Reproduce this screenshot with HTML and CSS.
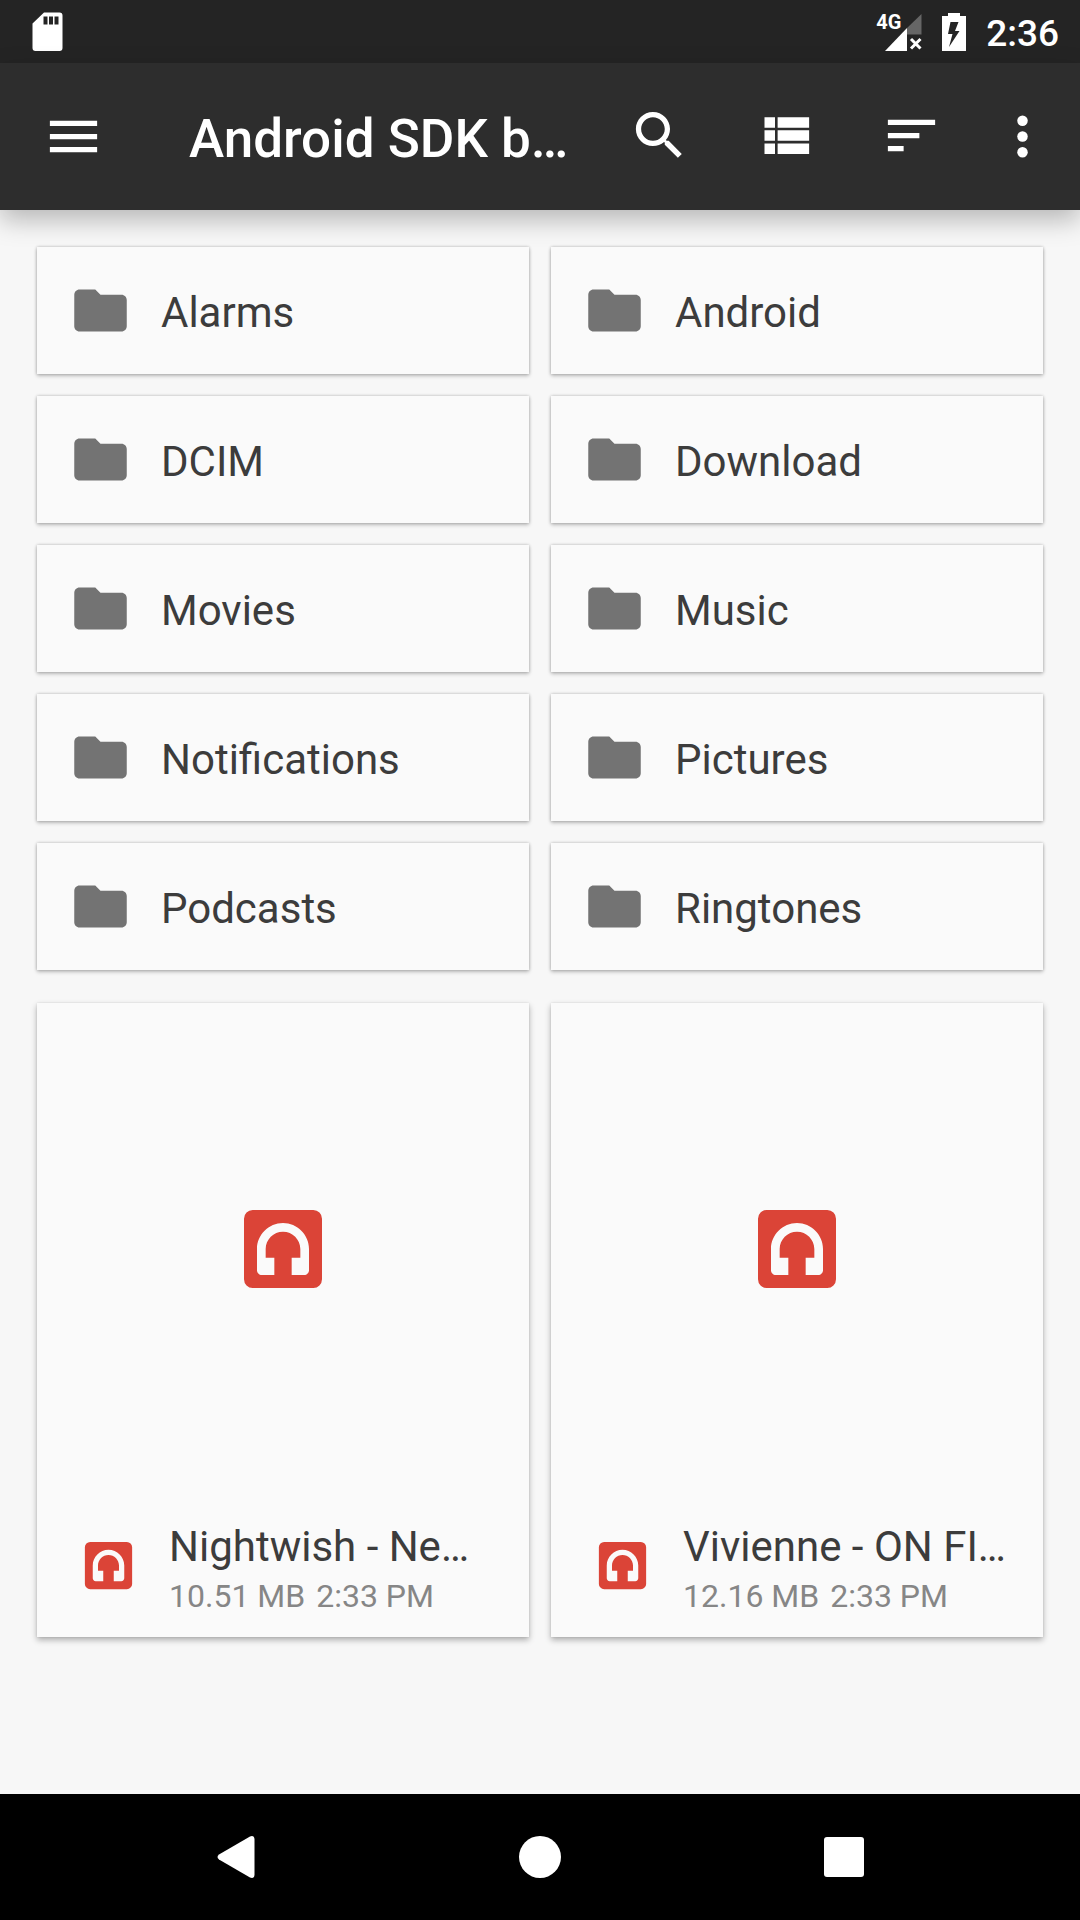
FILE: index.html
```html
<!DOCTYPE html>
<html lang="en">
<head>
<meta charset="utf-8">
<meta name="viewport" content="width=device-width, initial-scale=1">
<title>Files</title>
<link rel="stylesheet" href="styles.css">
</head>
<body>
<svg class="sprite" aria-hidden="true">
  <symbol id="folder" viewBox="0 0 24 24"><path d="M10 4H4c-1.100 0-1.990.900-1.990 2L2 18c0 1.100.900 2 2 2h16c1.100 0 2-.900 2-2V8c0-1.100-.900-2-2-2h-8z"/></symbol>
  <symbol id="audio" viewBox="0 0 24 24"><path fill-rule="evenodd" d="M5 3h14a2 2 0 0 1 2 2v14a2 2 0 0 1-2 2H5a2 2 0 0 1-2-2V5a2 2 0 0 1 2-2zM12 6c-3.300 0-6 2.700-6 6v4.900c0 .600.500 1.100 1.100 1.100H10v-4H8v-2c0-2.200 1.800-4 4-4s4 1.800 4 4v2h-2v4h2.900c.600 0 1.100-.500 1.100-1.100V12c0-3.300-2.700-6-6-6z"/></symbol>
</svg>

<div class="status-bar">
  <svg class="status-card" viewBox="0 0 31 39" aria-hidden="true"><path fill-rule="evenodd" d="M12 0.500H27.500a3 3 0 0 1 3 3V36a3 3 0 0 1-3 3H3.500a3 3 0 0 1-3-3V11.500zM11.500 4.500v8h4v-8zM17 4.500v8h4v-8zM22.500 4.500v8h4v-8z"/></svg>
  <div class="status-icons">
    <div class="signal">
      <svg class="signal-icon" viewBox="0 0 46 39" aria-hidden="true">
        <path opacity=".3" d="M45.500 2v20.500H31V16z"/>
        <path d="M31 16v23H9z"/>
        <path d="M35 27l9.500 9.500M44.500 27l-9.500 9.500" stroke="#fff" stroke-width="3"/>
      </svg>
      <span class="signal-type">4G</span>
    </div>
    <svg class="battery" viewBox="0 0 24 38" aria-hidden="true"><path fill-rule="evenodd" d="M6 0h12v3h6v35H0V3h6zM8.500 9L6 21h4.500L7 34l10.500-16H13l3.500-9z"/></svg>
    <time class="clock" datetime="14:36">2:36</time>
  </div>
</div>

<header class="toolbar">
  <button class="icon-button menu-button" type="button" aria-label="Open menu">
    <svg class="icon" viewBox="0 0 24 24"><path d="M3 18h18v-2H3zm0-5h18v-2H3zm0-7v2h18V6z"/></svg>
  </button>
  <h1 class="toolbar-title">Android SDK b…</h1>
  <div class="actions">
    <button class="icon-button" type="button" aria-label="Search">
      <svg class="icon" viewBox="0 0 24 24"><path d="M15.500 14h-.790l-.280-.270C15.410 12.590 16 11.110 16 9.500 16 5.910 13.090 3 9.500 3S3 5.910 3 9.500 5.910 16 9.500 16c1.610 0 3.090-.590 4.230-1.570l.270.280v.790l5 4.990L20.490 19zm-6 0C7.010 14 5 11.990 5 9.500S7.010 5 9.500 5 14 7.010 14 9.500 11.990 14 9.500 14z"/></svg>
    </button>
    <button class="icon-button" type="button" aria-label="List view">
      <svg class="icon" viewBox="0 0 24 24"><path d="M4 14h4v-4H4zm0 5h4v-4H4zM4 9h4V5H4zm5 5h12v-4H9zm0 5h12v-4H9zM9 5v4h12V5z"/></svg>
    </button>
    <button class="icon-button" type="button" aria-label="Sort">
      <svg class="icon" viewBox="0 0 24 24"><path d="M3 18h6v-2H3zM3 6v2h18V6zm0 7h12v-2H3z"/></svg>
    </button>
  </div>
  <button class="icon-button more-button" type="button" aria-label="More options">
    <svg class="icon" viewBox="0 0 24 24"><circle cx="12" cy="6" r="2"/><circle cx="12" cy="12" r="2"/><circle cx="12" cy="18" r="2"/></svg>
  </button>
</header>

<main class="content">
  <section class="grid" aria-label="Folders">
    <a class="folder" href="#alarms"><svg class="icon"><use href="#folder"/></svg><span class="name">Alarms</span></a>
    <a class="folder" href="#android"><svg class="icon"><use href="#folder"/></svg><span class="name">Android</span></a>
    <a class="folder" href="#dcim"><svg class="icon"><use href="#folder"/></svg><span class="name">DCIM</span></a>
    <a class="folder" href="#download"><svg class="icon"><use href="#folder"/></svg><span class="name">Download</span></a>
    <a class="folder" href="#movies"><svg class="icon"><use href="#folder"/></svg><span class="name">Movies</span></a>
    <a class="folder" href="#music"><svg class="icon"><use href="#folder"/></svg><span class="name">Music</span></a>
    <a class="folder" href="#notifications"><svg class="icon"><use href="#folder"/></svg><span class="name">Notifications</span></a>
    <a class="folder" href="#pictures"><svg class="icon"><use href="#folder"/></svg><span class="name">Pictures</span></a>
    <a class="folder" href="#podcasts"><svg class="icon"><use href="#folder"/></svg><span class="name">Podcasts</span></a>
    <a class="folder" href="#ringtones"><svg class="icon"><use href="#folder"/></svg><span class="name">Ringtones</span></a>
  </section>

  <section class="grid" aria-label="Files">
    <a class="file" href="#nightwish">
      <div class="preview"><svg class="preview-icon"><use href="#audio"/></svg></div>
      <div class="info">
        <svg class="icon"><use href="#audio"/></svg>
        <div class="details">
          <div class="name">Nightwish - Ne…</div>
          <div class="meta"><span>10.51 MB</span><span>2:33 PM</span></div>
        </div>
      </div>
    </a>
    <a class="file" href="#vivienne">
      <div class="preview"><svg class="preview-icon"><use href="#audio"/></svg></div>
      <div class="info">
        <svg class="icon"><use href="#audio"/></svg>
        <div class="details">
          <div class="name">Vivienne - ON FI…</div>
          <div class="meta"><span>12.16 MB</span><span>2:33 PM</span></div>
        </div>
      </div>
    </a>
  </section>
</main>

<nav class="nav-bar" aria-label="System">
  <button class="nav-button" type="button" aria-label="Back">
    <svg class="nav-icon" viewBox="0 0 44 44"><path d="M5 19.500L36 1.500Q40 0 40.500 4V40Q40 44 36 42.500L5 24.500Q2 22 5 19.500z"/></svg>
  </button>
  <button class="nav-button" type="button" aria-label="Home">
    <svg class="nav-icon" viewBox="0 0 44 44"><circle cx="22" cy="22" r="21"/></svg>
  </button>
  <button class="nav-button" type="button" aria-label="Recent apps">
    <svg class="nav-icon" viewBox="0 0 44 44"><rect x="2" y="2" width="40" height="40" rx="3"/></svg>
  </button>
</nav>
</body>
</html>
```
FILE: styles.css
```css
* {
  box-sizing: border-box;
}

body {
  display: flex;
  flex-direction: column;
  min-height: 100vh;
  margin: 0;
  background: #f7f7f7;
  color: #3c3c3c;
  font-family: Roboto, "Liberation Sans", sans-serif;
}

.sprite {
  display: none;
}

svg {
  display: block;
  flex: none;
  fill: currentColor;
}

button {
  display: flex;
  align-items: center;
  justify-content: center;
  margin: 0;
  padding: 0;
  border: 0;
  background: none;
  color: inherit;
}

a {
  color: inherit;
  text-decoration: none;
}

.icon {
  width: 63px;
  height: 63px;
}

/* Status bar */
.status-bar {
  display: flex;
  justify-content: space-between;
  height: 63px;
  padding: 0 21px 0 32px;
  background: #242424;
  color: #fff;
}

.status-card {
  width: 31px;
  height: 39px;
  margin-top: 12px;
}

.status-icons {
  display: flex;
  align-items: center;
  gap: 20px;
}

.signal {
  position: relative;
}

.signal-icon {
  width: 46px;
  height: 39px;
}

.signal-type {
  position: absolute;
  top: 0;
  left: 0;
  font-size: 20px;
  font-weight: 700;
  line-height: 20px;
}

.battery {
  width: 24px;
  height: 38px;
}

.clock {
  padding-top: 4px;
  font-size: 37px;
  font-weight: 500;
  line-height: 44px;
}

/* Toolbar */
.toolbar {
  display: flex;
  align-items: center;
  height: 147px;
  padding: 0 10px 0 42px;
  background: #2d2d2d;
  box-shadow: 0 10px 24px rgba(0, 0, 0, 0.26);
  color: #fff;
}

.menu-button {
  width: 147px;
  height: 126px;
  justify-content: flex-start;
}

.toolbar-title {
  flex: 1;
  margin: 0;
  padding-top: 4px;
  font-size: 53px;
  font-weight: 500;
  line-height: 62px;
  white-space: nowrap;
}

.actions {
  display: flex;
  padding-bottom: 2px;
}

.actions .icon-button {
  width: 126px;
  height: 126px;
}

.more-button {
  width: 96px;
  height: 126px;
}

/* Directory contents */
.content {
  display: flex;
  flex: 1;
  flex-direction: column;
  gap: 33px;
  padding: 37px;
}

.grid {
  display: grid;
  grid-template-columns: repeat(2, minmax(0, 1fr));
  gap: 22px;
}

.folder {
  display: flex;
  align-items: center;
  gap: 29px;
  padding: 32px;
  background: #fafafa;
  box-shadow: 0 0 3px rgba(0, 0, 0, 0.24), 0 2px 4px rgba(0, 0, 0, 0.22);
}

.folder .icon {
  color: #737373;
}

.name {
  font-size: 42px;
  line-height: 50px;
  white-space: nowrap;
}

.folder .name {
  padding-top: 4px;
}

.file {
  background: #fafafa;
  box-shadow: 0 0 2px rgba(0, 0, 0, 0.1), 0 3px 6px rgba(0, 0, 0, 0.3);
}

.file svg {
  color: #db4437;
}

.preview {
  display: flex;
  align-items: center;
  justify-content: center;
  aspect-ratio: 1;
}

.preview-icon {
  width: 104px;
  height: 104px;
}

.info {
  display: flex;
  align-items: center;
  gap: 29px;
  height: 142px;
  padding: 0 32px 2px 40px;
}

.details {
  padding-top: 6px;
}

.meta {
  display: flex;
  gap: 11px;
  margin-top: 5px;
  color: #868686;
  font-size: 32px;
  line-height: 38px;
  white-space: nowrap;
}

/* System navigation */
.nav-bar {
  display: grid;
  grid-template-columns: repeat(3, 1fr);
  padding: 0 84px;
  background: #000;
  color: #fff;
}

.nav-button {
  height: 126px;
}

.nav-icon {
  width: 44px;
  height: 44px;
}
```
